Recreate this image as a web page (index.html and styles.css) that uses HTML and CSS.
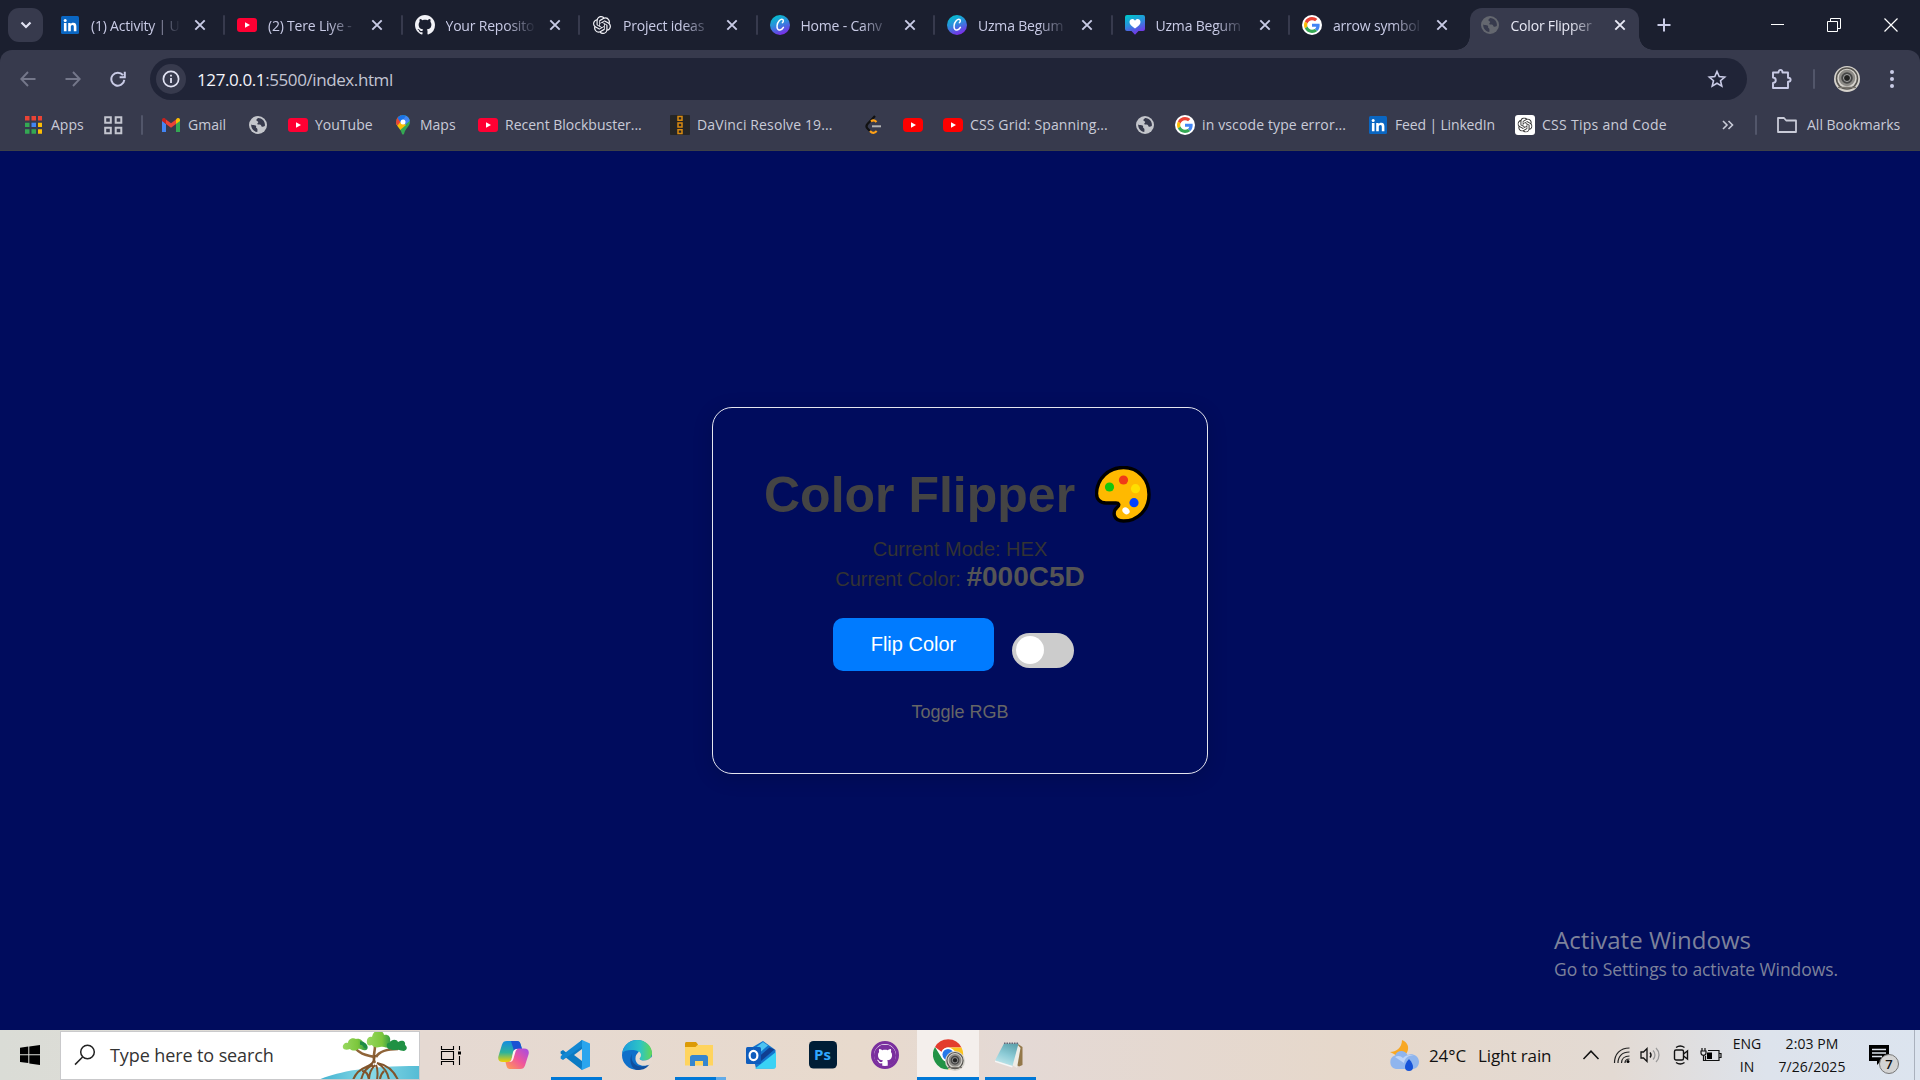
FILE: index.html
```html
<!DOCTYPE html>
<html lang="en">
<head>
<meta charset="utf-8">
<title>Color Flipper</title>
<link rel="stylesheet" href="styles.css">
</head>
<body>
<svg class="defs" aria-hidden="true">
  <defs>
    <linearGradient id="canvaG" x1="0.2" y1="0" x2="0.6" y2="1"><stop offset="0" stop-color="#00c4cc"/><stop offset=".45" stop-color="#2a8fdc"/><stop offset="1" stop-color="#7d2ae8"/></linearGradient>
    <symbol id="linkedin" viewBox="0 0 20 20"><rect x="1" y="1" width="18" height="18" rx="1.5" fill="#0a66c2"/><circle cx="5.2" cy="5.4" r="1.5" fill="#fff"/><path d="M3.9 8h2.6v8.2H3.9zM8.2 8h2.5v1.2c.5-.9 1.4-1.4 2.6-1.4 2.4 0 3.1 1.5 3.1 3.8v4.6h-2.6v-4.1c0-1.2-.2-2.1-1.4-2.1-1.3 0-1.6 1-1.6 2.1v4.1H8.200z" fill="#fff"/></symbol>
    <symbol id="yt" viewBox="0 0 20 20"><rect x="0" y="3" width="20" height="14" rx="3" fill="#ff0033"/><path d="M8 7.200v5.600l5-2.800z" fill="#fff"/></symbol>
    <symbol id="yt2" viewBox="0 0 20 20"><rect x="0" y="3" width="20" height="14" rx="4" fill="#ff0000"/><path d="M8 7.200v5.600l5-2.800z" fill="#fff"/></symbol>
    <symbol id="github" viewBox="0 0 16 16"><path fill="currentColor" d="M8 0C3.58 0 0 3.58 0 8c0 3.54 2.29 6.53 5.47 7.59.4.07.55-.17.55-.38 0-.19-.01-.82-.01-1.49-2.01.37-2.53-.49-2.69-.94-.09-.23-.48-.94-.82-1.13-.28-.15-.68-.52-.01-.53.63-.01 1.08.58 1.23.82.72 1.21 1.87.87 2.33.66.07-.52.28-.87.51-1.07-1.78-.2-3.64-.89-3.64-3.95 0-.87.31-1.59.82-2.15-.08-.2-.36-1.02.08-2.12 0 0 .67-.21 2.2.82.64-.18 1.32-.27 2-.27s1.36.09 2 .27c1.53-1.04 2.2-.82 2.2-.82.44 1.1.16 1.92.08 2.12.51.56.82 1.27.82 2.15 0 3.07-1.87 3.75-3.65 3.95.29.25.54.73.54 1.48 0 1.07-.01 1.93-.01 2.2 0 .21.15.46.55.38A8.01 8.01 0 0 0 16 8c0-4.42-3.58-8-8-8z"/></symbol>
    <symbol id="openai" viewBox="0 0 24 24"><path fill="currentColor" d="M22.2819 9.8211a5.9847 5.9847 0 0 0-.5157-4.9108 6.0462 6.0462 0 0 0-6.5098-2.9A6.0651 6.0651 0 0 0 4.9807 4.1818a5.9847 5.9847 0 0 0-3.9977 2.9 6.0462 6.0462 0 0 0 .7427 7.0966 5.98 5.98 0 0 0 .511 4.9107 6.051 6.051 0 0 0 6.5146 2.9001A5.9847 5.9847 0 0 0 13.2599 24a6.0557 6.0557 0 0 0 5.7718-4.2058 5.9894 5.9894 0 0 0 3.9977-2.9001 6.0557 6.0557 0 0 0-.7475-7.0729zm-9.022 12.6081a4.4755 4.4755 0 0 1-2.8764-1.0408l.1419-.0804 4.7783-2.7582a.7948.7948 0 0 0 .3927-.6813v-6.7369l2.02 1.1686a.071.071 0 0 1 .038.052v5.5826a4.504 4.504 0 0 1-4.4945 4.4944zm-9.6607-4.1254a4.4708 4.4708 0 0 1-.5346-3.0137l.142.0852 4.783 2.7582a.7712.7712 0 0 0 .7806 0l5.8428-3.3685v2.3324a.0804.0804 0 0 1-.0332.0615L9.74 19.9502a4.4992 4.4992 0 0 1-6.1408-1.6464zM2.3408 7.8956a4.485 4.485 0 0 1 2.3655-1.9728V11.6a.7664.7664 0 0 0 .3879.6765l5.8144 3.3543-2.0201 1.1685a.0757.0757 0 0 1-.071 0l-4.8303-2.7865A4.504 4.504 0 0 1 2.3408 7.872zm16.5963 3.8558L13.1038 8.364 15.1192 7.2a.0757.0757 0 0 1 .071 0l4.8303 2.7913a4.4944 4.4944 0 0 1-.6765 8.1042v-5.6772a.79.79 0 0 0-.407-.667zm2.0107-3.0231l-.142-.0852-4.7735-2.7818a.7759.7759 0 0 0-.7854 0L9.409 9.2297V6.8974a.0662.0662 0 0 1 .0284-.0615l4.8303-2.7866a4.4992 4.4992 0 0 1 6.6802 4.66zM8.3065 12.863l-2.02-1.1638a.0804.0804 0 0 1-.038-.0567V6.0742a4.4992 4.4992 0 0 1 7.3757-3.4537l-.142.0805L8.704 5.459a.7948.7948 0 0 0-.3927.6813zm1.0976-2.3654l2.602-1.4998 2.6069 1.4998v2.9994l-2.5974 1.4997-2.6067-1.4997Z"/></symbol>
    <symbol id="canva" viewBox="0 0 20 20"><circle cx="10" cy="10" r="10" fill="url(#canvaG)"/><path d="M12.400 7.600c1-.4 1.500-2.700 0-3.200-2-.5-4.800 2.300-5.300 6.100-.4 3.300 1.100 4.800 2.900 4.500 1.500-.2 2.700-1.300 3.400-2.600" fill="none" stroke="#fff" stroke-width="1.500" stroke-linecap="round"/></symbol>
    <symbol id="canvaHeart" viewBox="0 0 20 20"><path d="M2 0h16a2 2 0 0 1 2 2v12a2 2 0 0 1-2 2h-4.500L10 19.800 6.500 16H2a2 2 0 0 1-2-2V2a2 2 0 0 1 2-2z" fill="url(#canvaG)"/><path d="M10 13.500C6.500 11 4.500 9.300 4.500 7c0-3 3.900-4.100 5.500-1.300C11.600 2.900 15.500 4 15.500 7c0 2.300-2 4-5.500 6.500z" fill="#fff"/></symbol>
    <symbol id="google" viewBox="0 0 60 60"><circle cx="30" cy="30" r="30" fill="#fff"/><g transform="translate(6 6)"><path fill="#EA4335" d="M24 9.500c3.540 0 6.710 1.220 9.210 3.600l6.850-6.850C35.900 2.380 30.470 0 24 0 14.620 0 6.510 5.380 2.560 13.220l7.980 6.190C12.430 13.720 17.740 9.500 24 9.500z"/><path fill="#4285F4" d="M46.980 24.550c0-1.570-.15-3.090-.38-4.550H24v9.020h12.940c-.58 2.960-2.260 5.480-4.780 7.180l7.730 6c4.510-4.180 7.090-10.360 7.090-17.650z"/><path fill="#FBBC05" d="M10.530 28.590c-.48-1.450-.76-2.990-.76-4.590s.27-3.140.76-4.590l-7.980-6.190C.92 16.460 0 20.120 0 24c0 3.880.92 7.540 2.560 10.780l7.970-6.190z"/><path fill="#34A853" d="M24 48c6.480 0 11.930-2.130 15.890-5.810l-7.730-6c-2.150 1.450-4.920 2.300-8.160 2.300-6.260 0-11.570-4.220-13.470-9.910l-7.980 6.190C6.510 42.620 14.620 48 24 48z"/></g></symbol>
    <symbol id="globe" viewBox="0 0 20 20"><circle cx="10" cy="10" r="9" fill="currentColor"/><path d="M3.200 9.500c1.500.8 3.200.3 4.400 1 1.300.8-.2 1.900.9 2.600 1 .6 1.200 1.300.8 3.900-3.400-.3-6.400-3.600-6.100-7.500zM10.200 3c-1.400 1-2 1.600-1.700 2.600.3.800 1.600.5 1.700 1.500.1.900-1.100 1-.9 1.900.3.900 2.100.1 3.200.8.900.6.6 1.700 1.600 2 .8.200 1.800-.2 2.700-.7.900-4-2.300-8.100-6.600-8.100z" fill="var(--bg)"/></symbol>
    <symbol id="x" viewBox="0 0 12 12"><path d="M1.300 1.300l9.400 9.400M10.700 1.300L1.300 10.700" stroke="currentColor" stroke-width="1.900" fill="none"/></symbol>
    <symbol id="lens" viewBox="0 0 26 26"><circle cx="13" cy="13" r="13" fill="#d5d2cc"/><circle cx="13" cy="12.500" r="10.500" fill="none" stroke="#55534f" stroke-width="1.500"/><circle cx="13" cy="12" r="7" fill="#464646" stroke="#8c8a86" stroke-width="2.500"/><circle cx="13" cy="12" r="3.500" fill="#222" stroke="#aaa"/><path d="M4 21.500h18" stroke="#77736c" stroke-width="1.500"/></symbol>
  </defs>
</svg>

<header class="tabstrip">
  <button class="tabsearch"><svg width="12" height="8" viewBox="0 0 12 8"><path d="M1.500 1.500L6 6l4.500-4.500" fill="none" stroke="#e1e2f2" stroke-width="2.200"/></svg></button>
  <div class="tabs">
    <div class="tab"><svg class="fav"><use href="#linkedin"/></svg><span class="title">(1) Activity | U</span><svg class="close"><use href="#x"/></svg></div>
    <div class="tab"><svg class="fav"><use href="#yt"/></svg><span class="title">(2) Tere Liye -</span><svg class="close"><use href="#x"/></svg></div>
    <div class="tab"><svg class="fav white"><use href="#github"/></svg><span class="title">Your Reposito</span><svg class="close"><use href="#x"/></svg></div>
    <div class="tab"><svg class="fav white ai"><use href="#openai"/></svg><span class="title">Project ideas</span><svg class="close"><use href="#x"/></svg></div>
    <div class="tab"><svg class="fav"><use href="#canva"/></svg><span class="title">Home - Canv</span><svg class="close"><use href="#x"/></svg></div>
    <div class="tab"><svg class="fav"><use href="#canva"/></svg><span class="title">Uzma Begum</span><svg class="close"><use href="#x"/></svg></div>
    <div class="tab"><svg class="fav"><use href="#canvaHeart"/></svg><span class="title">Uzma Begum</span><svg class="close"><use href="#x"/></svg></div>
    <div class="tab last"><svg class="fav"><use href="#google"/></svg><span class="title">arrow symbol</span><svg class="close"><use href="#x"/></svg></div>
    <div class="tab active"><svg class="fav dim"><use href="#globe"/></svg><span class="title">Color Flipper</span><svg class="close"><use href="#x"/></svg></div>
  </div>
  <svg class="newtab" width="14" height="14" viewBox="0 0 14 14"><path d="M7 .5v13M.5 7h13" stroke="#c9cbe6" stroke-width="2"/></svg>
  <div class="winbtns">
    <svg width="14" height="14" viewBox="0 0 14 14"><path d="M1 6.500h13" stroke="#fff"/></svg>
    <svg width="14" height="14" viewBox="0 0 14 14"><path d="M.5 3.500h10v10H.5zM3.500 3V.5h10v10H11" fill="none" stroke="#fff"/></svg>
    <svg width="14" height="14" viewBox="0 0 14 14"><path d="M.5.5l13 13M13.500.5l-13 13" stroke="#fff" stroke-width="1.200"/></svg>
  </div>
</header>

<nav class="toolbar">
  <div class="nav">
    <svg width="16" height="16" viewBox="0 0 16 16"><path d="M8 1L1.300 8 8 15M1.500 8H15.500" fill="none" stroke="#74778a" stroke-width="1.900"/></svg>
    <svg width="16" height="16" viewBox="0 0 16 16"><path d="M8 1l6.700 7L8 15M14.500 8H.5" fill="none" stroke="#74778a" stroke-width="1.900"/></svg>
    <svg width="16" height="16" viewBox="0 0 16 16"><path d="M14.300 8.800A6.500 6.500 0 1 1 13 4.200M14.800.8v5.400H9.600" fill="none" stroke="#c9cbe6" stroke-width="2"/></svg>
  </div>
  <div class="omnibox">
    <span class="info"><svg width="18" height="18" viewBox="0 0 18 18"><circle cx="9" cy="9" r="7.600" fill="none" stroke="#e1e2f2" stroke-width="1.700"/><path d="M9 8v5M9 4.800v1.800" stroke="#e1e2f2" stroke-width="1.800"/></svg></span>
    <span class="url"><b>127.0.0.1</b>:5500/index.html</span>
    <svg class="star" width="20" height="20" viewBox="0 0 20 20"><path d="M10 2.500l2.200 5.100 5.500.5-4.200 3.600 1.300 5.400-4.800-2.900-4.800 2.900 1.300-5.400L2.300 8.100l5.500-.5z" fill="none" stroke="#c9cbe6" stroke-width="1.600"/></svg>
  </div>
  <div class="tools">
    <svg width="22" height="22" viewBox="0 0 22 22"><path d="M2 4.500h5.500c0-3.500 4-3.500 4 0H17v5.300c3.500 0 3.500 4 0 4V20H2v-5c3.700-.4 3.700-5.100 0-5.500z" fill="none" stroke="#c9cbe6" stroke-width="1.900" stroke-linejoin="round"/></svg>
    <i class="bar"></i>
    <svg width="26" height="26"><use href="#lens"/></svg>
    <svg width="6" height="20" viewBox="0 0 6 20"><circle cx="3" cy="3" r="2" fill="#c9cbe6"/><circle cx="3" cy="10" r="2" fill="#c9cbe6"/><circle cx="3" cy="17" r="2" fill="#c9cbe6"/></svg>
  </div>
</nav>

<nav class="bookmarks">
  <a><svg viewBox="0 0 20 20"><g><path fill="#ea4335" d="M1 1h4.500v4.500H1zM7.500 1H12v4.500H7.500zM14 1h4v4.500h-4z"/><path fill="#34a853" d="M1 7.700h4.500V12H1zM1 14.200h4.500v4.500H1zM7.500 14.200H12v4.500H7.500z"/><path fill="#4285f4" d="M7.500 7.700H12V12H7.500z"/><path fill="#fbbc05" d="M14 7.700h4V12h-4zM14 14.200h4v4.500h-4z"/></g></svg>Apps</a>
  <a><svg viewBox="0 0 20 20"><path d="M2.200 2.200h5.600v5.600H2.200zM12.700 2.200h5.600v5.600h-5.600zM2.200 12.700h5.600v5.600H2.200zM12.700 12.700h5.600v5.600h-5.600z" fill="none" stroke="#c3c5cf" stroke-width="2"/></svg></a>
  <i class="bar"></i>
  <a><svg viewBox="0 0 20 20"><path d="M1 5v12h4V9z" fill="#4285f4"/><path d="M19 5v12h-4V9z" fill="#34a853"/><path d="M15 4.500V9l4-3V5c0-2-2.200-3-4-.5z" fill="#fbbc04"/><path d="M1 5v1l4 3V4.500C3.200 2 1 3 1 5z" fill="#c5221f"/><path d="M5 4.500V9l5 3.800L15 9V4.500L10 8.300z" fill="#ea4335"/></svg>Gmail</a>
  <a><svg class="soft"><use href="#globe"/></svg></a>
  <a><svg><use href="#yt"/></svg>YouTube</a>
  <a><svg viewBox="0 0 20 20"><clipPath id="pin"><path d="M10 0a7 7 0 0 1 7 7c0 4-4.500 6-5.800 11.500-.4 1.500-2 1.500-2.400 0C7.500 13 3 11 3 7a7 7 0 0 1 7-7z"/></clipPath><g clip-path="url(#pin)"><path fill="#34a853" d="M0 0h20v20H0z"/><path fill="#fbbc04" d="M0 12L10 2l3 8-7 6z"/><path fill="#ea4335" d="M0 0h8l1 5-5 6-4-1z"/><path fill="#1a73e8" d="M5 0h9L8 8 4.500 3z"/><path fill="#4285f4" d="M10 5l4-6 4 6-6 5z"/></g><circle cx="10" cy="7" r="2.500" fill="#fff"/></svg>Maps</a>
  <a><svg><use href="#yt"/></svg>Recent Blockbuster...</a>
  <a class="loose"><svg viewBox="0 0 20 20"><rect width="20" height="20" rx="1" fill="#252525"/><path d="M8 1.500h4v3.700H8zM8 8h4v4H8zM8 14.800h4v3.700H8z" fill="none" stroke="#d98a10" stroke-width="1.500"/></svg>DaVinci Resolve 19...</a>
  <a><svg viewBox="0 0 20 20"><path d="M12 1L4.500 9c-1.400 1.500-1.400 3 0 4.500L7 16" fill="none" stroke="#111" stroke-width="2.200"/><path d="M8 6.500c2-1.700 3.500-1.500 5.500.5M7 16c2.500 2.700 4.500 2.300 6.700 0" fill="none" stroke="#ffa116" stroke-width="2.200"/><path d="M9 11.300h9" stroke="#b3b3b3" stroke-width="2"/></svg></a>
  <a><svg><use href="#yt2"/></svg></a>
  <a class="loose"><svg><use href="#yt2"/></svg>CSS Grid: Spanning...</a>
  <a><svg class="soft"><use href="#globe"/></svg></a>
  <a class="loose"><svg><use href="#google"/></svg>in vscode type error...</a>
  <a class="tight"><svg><use href="#linkedin"/></svg>Feed | LinkedIn</a>
  <a class="looser"><svg viewBox="0 0 20 20"><rect width="20" height="20" rx="3" fill="#fff"/><g color="#333"><use href="#openai" x="2.500" y="2.500" width="15" height="15"/></g></svg>CSS Tips and Code</a>
  <a><svg viewBox="0 0 20 20"><path d="M5 6l4 4-4 4M10.500 6l4 4-4 4" fill="none" stroke="#c9cbd8" stroke-width="1.600"/></svg></a>
  <i class="bar"></i>
  <a><svg class="folder" viewBox="0 0 22 20"><path d="M2 3h6l2.200 2.500H20V17H2z" fill="none" stroke="#c9cbd8" stroke-width="1.800" stroke-linejoin="round"/></svg>All Bookmarks</a>
</nav>

<main class="page">
  <section class="card">
    <h1>Color Flipper
      <svg width="56" height="58" viewBox="0 0 56 58"><path d="M28.500 1.500C44 1.500 54 14 54 28.500 54 43.500 43 55 28.500 55c-10.500 0-11.500-9.500-6-14 2.200-2 1.500-4-1.500-4H11C4.500 37 1.500 32.500 1.500 27.500 2 12 14 1.500 28.500 1.500z" fill="#ffb900" stroke="#000" stroke-width="3.400"/><circle cx="28.500" cy="14" r="4.600" fill="#f03a17"/><circle cx="14.500" cy="21" r="4.600" fill="#16c60c"/><circle cx="40.500" cy="22.700" r="4.600" fill="#ffde00"/><circle cx="39" cy="36.700" r="4.600" fill="#0040ff"/><ellipse cx="31" cy="44.800" rx="3.900" ry="3.100" transform="rotate(40 31 44.800)" fill="#fff"/></svg></h1>
    <p class="mode">Current Mode: HEX</p>
    <p class="color">Current Color: <strong>#000C5D</strong></p>
    <div class="controls">
      <button class="flip">Flip Color</button>
      <span class="switch"><i></i></span>
    </div>
    <p class="label">Toggle RGB</p>
  </section>
  <aside class="watermark"><p>Activate Windows</p><p>Go to Settings to activate Windows.</p></aside>
</main>

<footer class="taskbar">
  <div class="start"><svg width="20" height="20" viewBox="0 0 20 20"><path d="M0 2.800L8.300 1.600v7.700H0zM9.300 1.500L20 0v9.300H9.300zM0 10.300h8.300v7.800L0 17zM9.300 10.300H20V20L9.300 18.400z"/></svg></div>
  <div class="search">
    <svg width="22" height="22" viewBox="0 0 22 22"><circle cx="13.500" cy="8" r="6.800" fill="none" stroke="#222" stroke-width="1.500"/><path d="M8.600 13L1 20.600" stroke="#222" stroke-width="1.500"/></svg>
    <span>Type here to search</span>
    <svg class="tree" width="101" height="49" viewBox="0 0 101 49">
      <defs><linearGradient id="sea" x1="0" x2="1"><stop offset="0" stop-color="#3fb0cf"/><stop offset=".5" stop-color="#8adbe8"/><stop offset="1" stop-color="#55bcd5"/></linearGradient><linearGradient id="leaf" x1="0" x2="1"><stop offset="0" stop-color="#98d860"/><stop offset=".6" stop-color="#7cc63c"/><stop offset="1" stop-color="#239347"/></linearGradient></defs>
      <path d="M0 49C20 41 45 35 101 35v14z" fill="url(#sea)"/>
      <path d="M57 15c0 7-3 12 0 17M37 17c6 7 12 7 19 9M80 18c-8 0-18 1-22 8" fill="none" stroke="#8f6439" stroke-width="2.600"/>
      <path d="M57 24c-1 8-3 9-9 12-7 3-10 6-13 13M55 34c-8 3-10 8-12 15M57 34c-4 4-6 8-6 15M58 34c2 4 2 8 1 15M59 32c7 4 11 9 12 17M59 32c11 2 17 8 21 17M44 40c5 0 6 4 7 9M66 40c-3 3-4 5-4 9" fill="none" stroke="#80542b" stroke-width="2"/>
      <g fill="url(#leaf)"><path d="M25 17c-1-4 3-6 5-5 0-4 5-6 8-4 4-1 7 2 7 4 5 0 6 6 3 7-4 1-5-2-8-1-2 2-6 2-8 0-3 1-6 1-7-1z"/><path d="M49 12c-1-4 2-7 5-6 1-5 4-7 7-6 4 0 5 3 5 4 5-1 7 3 6 6 3 2 3 6 0 7-4 0-6-2-10-1-4 1-7 0-8-2-3 1-5 0-5-2z"/><path d="M69 16c-1-3 1-5 3-4 1-4 7-4 8-1 5-3 8 0 7 3 3 2 2 5-1 6-3 0-5-2-8-1-4 0-8 0-9-3z" fill="#209144"/></g>
      <path d="M42 12c4 0 6 3 5 5" stroke="#1e8d45" stroke-width="3.500" fill="none"/>
    </svg>
  </div>
  <div class="apps">
    <div class="app"><svg width="22" height="20" viewBox="0 0 22 20"><path d="M1.500 1v3.500h12V1M1.500 20v-3.500h12V20M1.500 6.500h12v8h-12zM19.500 1v4M19.500 11v9" fill="none" stroke="#000" stroke-width="1.100"/><path d="M18 6.500h3v3h-3z"/></svg></div>
    <div class="app"><svg width="31" height="30" viewBox="0 0 31 30"><defs><linearGradient id="cpA" x1="0" y1="0" x2="0" y2="1"><stop offset="0" stop-color="#138be0"/><stop offset=".55" stop-color="#2fb39a"/><stop offset="1" stop-color="#f5d000"/></linearGradient><linearGradient id="cpB" x1="1" y1="0" x2="0" y2="1"><stop offset="0" stop-color="#a04be8"/><stop offset=".5" stop-color="#f0569a"/><stop offset="1" stop-color="#ffa04e"/></linearGradient></defs><path d="M9 1h10c2 0 3 1 3.500 3L24 9h-4c-3 0-4 1.500-5 5l-1.500 5c-.7 2-1.500 3-4 3H5c-4 0-5.500-2.500-4.500-6L4 4.500C5 2 6 1 9 1z" fill="url(#cpA)"/><path d="M13 1h6c2 0 3 1 3.500 3L24 9h-4c-2 0-3 .5-4 2z" fill="#1b51d3"/><path d="M22 29H12c-2 0-3-1-3.500-3L7.500 22h2.200c2.500 0 3.500-1.500 4.300-4l1.800-5.500c1-3 2-4 5-4H26c4 0 5.500 2.500 4.500 6L27 25.500c-1 2.500-2 3.500-5 3.500z" fill="url(#cpB)"/><path d="M15 12c1.500-3 2.500-3 4.500-3-2 1-2 3-3 6l-1 3.500c-.7 2-1.500 3.500-4 3.500 2-1 2-3 2.500-4.500z" fill="#fff1ef"/></svg></div>
    <div class="app run"><svg width="30" height="30" viewBox="0 0 30 30"><path d="M22 0L7.500 13.500 3 10 .6 11.500v2L22 30l2-4V4z" fill="#0a7bc4"/><path d="M.6 18.500l2.400 1.500L24 5 22 0 .8 16z" fill="#1287d2"/><path d="M22 0l8 3.500v23L22 30c-1 0 0-3 0-4V4z" fill="#2aa5ee"/><path d="M22 9v12l-8-6z" fill="#e7dbd1"/></svg></div>
    <div class="app"><svg width="30" height="30" viewBox="0 0 30 30"><defs><linearGradient id="edA" x1="0" x2="1"><stop offset="0" stop-color="#1b9bdc"/><stop offset=".6" stop-color="#2dc4c5"/><stop offset="1" stop-color="#62d854"/></linearGradient></defs><circle cx="15" cy="15" r="15" fill="#0e6fca"/><path d="M.3 13C1.500 5 8 0 15 0c9 0 15 6.500 15 13 0 5-4 7.500-8 7.500-3 0-4.800-1-4.300-2.200 1.800-3 .3-6.800-3.700-7.800C8 9.500 2 10.500.3 13z" fill="url(#edA)"/><path d="M10 14c-2 7 3 13 10 12.500 3.500 0 5.500-1.200 7.600-2.500C24.500 29 20 30.200 15 30 9 29 6.500 19 10 14z" fill="#114f9e"/><path d="M17 11.500c2.500 1.800 2.500 4.500.8 6.800-.7 1.400 1.400 2.300 4.200 2.300 3 0 6-1.600 7.500-4l1.500 5-3 2.700c-6 3-14 1.500-14.500-5-.2-4 1-5 3.500-7.800z" fill="#e7dbd1"/></svg></div>
    <div class="app run split"><svg width="28" height="26" viewBox="0 0 28 26"><path d="M0 1.500C0 .6.600 0 1.500 0H11l2 2.500V6H0z" fill="#dc9a05"/><path d="M0 5h10.500l2-2H28v20.500H0z" fill="#ffd45e"/><path d="M5 24v-8.500c0-1.500 1-2.500 2.500-2.500h13c1.500 0 2.500 1 2.500 2.500V24h-5v-5h-8v5z" fill="#3686cf"/></svg></div>
    <div class="app"><svg width="30" height="28" viewBox="0 0 30 28"><path d="M5 7L17 0l12.500 9v15.500c0 2-1 3-3 3H10z" fill="#1374cc"/><path d="M8 8l9-7 5 3.500L12 13z" fill="#4cc3f2"/><path d="M28.500 8.500L15 20l-2-4.500 10.500-9z" fill="#103f91"/><path d="M9 27.500L30 11v14c0 2-1 2.800-3 2.800H12z" fill="#3ad2f5"/><rect y="6" width="15" height="17" rx="1.500" fill="#0f5dbd"/><ellipse cx="7.500" cy="14.500" rx="3.900" ry="4.600" fill="none" stroke="#fff" stroke-width="2.200"/></svg></div>
    <div class="app"><svg width="28" height="28" viewBox="0 0 28 28"><rect width="28" height="27.500" rx="4.500" fill="#001e36"/><text x="5" y="18.500" class="ps">Ps</text></svg></div>
    <div class="app"><svg width="28" height="28" viewBox="0 0 28 28"><circle cx="14" cy="14" r="13" fill="#fff"/><g color="#7a2f9e"><use href="#github" x="3" y="3.500" width="22" height="22"/></g><circle cx="14" cy="14" r="12.500" fill="none" stroke="#7a2f9e" stroke-width="3"/></svg></div>
    <div class="app run current"><svg width="34" height="32" viewBox="0 0 34 32"><circle cx="15" cy="15.500" r="15" fill="#fff"/><path d="M2 8A15 15 0 0 1 28.500 8.500H15.200a7 7 0 0 0-6.500 4.500z" fill="#e33b2e"/><path d="M28.500 8.500A15 15 0 0 1 15 30.500l6.500-11.500a7 7 0 0 0 .3-7L15 8.500z" fill="#fcc31e"/><path d="M2 8A15 15 0 0 0 15 30.500l6-10.500a7 7 0 0 1-12-.5z" fill="#229346"/><circle cx="15" cy="15.500" r="7" fill="#fff"/><circle cx="15" cy="15.500" r="5.500" fill="#2678ea"/><use href="#lens" x="12" y="12" width="20" height="20"/></svg></div>
    <div class="app run note"><svg width="28" height="27" viewBox="0 0 28 27"><defs><linearGradient id="pad" x1=".7" y1="0" x2=".3" y2="1"><stop offset="0" stop-color="#5fa3ae"/><stop offset=".5" stop-color="#8ccbd6"/><stop offset="1" stop-color="#c4e8ec"/></linearGradient></defs><path d="M23 2l4.500 3v18L24 24.500 20 22z" fill="#93784a"/><path d="M22 2l3.500 4-3.500 20-5-3z" fill="#eeece6"/><path d="M9 1.500h14.500L17.500 24 0 18.500z" fill="url(#pad)"/><path d="M0 18.500L17.500 24l-.3 1.500L0 20z" fill="#f4f7f7"/><path d="M9 1.200h15" stroke="#667" stroke-width="1.500" stroke-dasharray="1.500 1"/></svg></div>
  </div>
  <div class="tray">
    <svg class="weather" width="32" height="32" viewBox="0 0 32 32"><path d="M13 1c6 2 7.500 8 5 12.500-3 4.500-9 5-13 1.500l-4-2c6 0 12-4 12-12z" fill="#f8a823"/><path d="M7 30a7 7 0 0 1-1-13.500C7.500 11 16 10 18.500 16c4-2 11 0 11.500 6.500 0 5-3 7.500-7 7.500z" fill="#8fb5ee"/><path d="M6 18c3-2 6-1 8 1 3-3 7-4 11-2-3-1-9 0-10 7" fill="#bed5f8"/><path d="M20 20c3 3 4 6 4 8a4 4 0 0 1-8 0c0-2 1-5 4-8z" fill="#1653d8"/></svg>
    <span class="temp">24°C</span><span class="cond">Light rain</span>
    <svg class="chev" width="18" height="12" viewBox="0 0 18 12"><path d="M1.500 10L9 2.200l7.500 7.800" fill="none" stroke="#111" stroke-width="1.500"/></svg>
    <svg class="wifi" width="18" height="18" viewBox="0 0 18 18"><path d="M1.500 17C1.500 8 7 2 16.500 2M5 17C5 10.500 9 6 16.500 6M8.500 17c0-4 3-7 8-7M12 17c0-2 1.500-4 4.500-4" fill="none" stroke="#222" stroke-width="1.200"/><circle cx="15" cy="15.500" r="1.500"/></svg>
    <svg class="snd" width="22" height="18" viewBox="0 0 22 18"><path d="M1 6h2.500L7 2.500v13L3.500 12H1z" fill="none" stroke="#111" stroke-width="1.300"/><path d="M10 6.500c1.300 1.500 1.300 3.500 0 5" fill="none" stroke="#111" stroke-width="1.300"/><path d="M13 4.500c2.600 2.500 2.600 6.500 0 9M16 2c4 4 4 10 0 14" fill="none" stroke="#999" stroke-width="1.300"/></svg>
    <svg class="cam" width="16" height="20" viewBox="0 0 16 20"><rect x="1.500" y="5" width="9" height="10" rx="1.500" fill="none" stroke="#111" stroke-width="1.400"/><path d="M10.500 9L14.500 6v8l-4-3M3 2.500C5.500.8 9 .8 11.500 2.500M3 17.500c2.500 1.700 6 1.700 8.500 0" fill="none" stroke="#111" stroke-width="1.400"/></svg>
    <svg class="batt" width="22" height="16" viewBox="0 0 22 16"><path d="M8 3.500h11v10H5.500V9M19.500 6.500h1.500v4h-1.500" fill="none" stroke="#111" stroke-width="1.200"/><path d="M7 5.500h5V12H7z"/><path d="M2 1v3M5 1v3M1 4h5v2c0 3-5 3-5 0zM3.500 8v5.500h3" fill="none" stroke="#111" stroke-width="1.200"/></svg>
    <div class="stack lang"><span>ENG</span><span>IN</span></div>
    <div class="stack clock"><span>2:03 PM</span><span>7/26/2025</span></div>
    <div class="notify"><svg width="20" height="20" viewBox="0 0 20 20"><path d="M0 0h20v16H12l-4 4v-4H0z"/><path d="M3 4.500h14M3 8h14M3 11.500h10" stroke="#dde3ec" stroke-width="1.300"/></svg><b>7</b></div>
    <i class="peek"></i>
  </div>
</footer>
</body>
</html>
```
FILE: styles.css
```css
* { box-sizing: border-box; margin: 0; padding: 0; }
body {
  --bg: #373a4d;
  width: 1920px; height: 1080px; overflow: hidden;
  display: grid; grid-template-rows: 50px 58px 43px 879px 50px;
  background: #1b1f2f;
  font-family: "Open Sans", "Noto Sans", sans-serif;
  font-size: 14px; color: #c9cbd8;
}
svg { display: block; flex: none; }
.defs { position: absolute; width: 0; height: 0; }
button { border: 0; font: inherit; }

/* tab strip */
.tabstrip { display: flex; align-items: center; padding-left: 8px; background: #1b1f2f; }
.tabsearch { width: 35px; height: 34px; border-radius: 11px; background: #373a4d; display: grid; place-items: center; }
.tabs { display: flex; align-self: stretch; margin-left: 12px; }
.tab { width: 177.5px; padding-left: 12px; display: flex; align-items: center; position: relative; color: #c9cbe6; }
.tab:first-child { width: 170px; padding-left: 5px; }
.tab:not(.last):not(.active)::after { content: ""; position: absolute; right: 0; top: 15px; width: 2px; height: 20px; background: #373a4d; border-radius: 1px; }
.fav { width: 20px; height: 20px; }
.ai { padding: 1px; }
.white { color: #f2f2f7; }
.dim { color: #64676f; }
.title { width: 92px; margin-left: 11px; white-space: nowrap; letter-spacing: -.2px; mask-image: linear-gradient(90deg, #000 65%, transparent 98%); }
.close { width: 12px; height: 12px; margin-left: 11px; }
.active { margin: 8px 0 0 2px; width: 169px; height: 42px; padding: 0 0 8px 10px; background: var(--bg); border-radius: 12px 12px 0 0; color: #e8e9f5; }
.active::before, .active::after { content: ""; position: absolute; bottom: 0; width: 14px; height: 14px; }
.active::before { left: -14px; background: radial-gradient(circle at 0 0, transparent 13.500px, var(--bg) 14px); }
.active::after { right: -14px; background: radial-gradient(circle at 100% 0, transparent 13.500px, var(--bg) 14px); }
.newtab { margin-left: 18px; }
.winbtns { margin-left: auto; display: flex; gap: 43px; padding-right: 22px; }

/* toolbar */
.toolbar { display: flex; align-items: center; background: var(--bg); border-radius: 12px 12px 0 0; }
.nav { display: flex; gap: 29px; width: 150px; padding-left: 20px; }
.omnibox { width: 1597px; height: 42px; border-radius: 21px; background: #202437; display: flex; align-items: center; padding: 0 20px 0 6px; }
.info { width: 30px; height: 30px; border-radius: 50%; background: #373a4d; display: grid; place-items: center; }
.url { margin-left: 11px; font-size: 17px; letter-spacing: -.4px; color: #c3c5d3; }
.url b { font-weight: 400; color: #f5f5fb; }
.star { margin-left: auto; }
.tools { display: flex; align-items: center; padding-left: 24px; }
.bar { width: 2px; height: 20px; background: #52566a; border-radius: 1px; }
.tools .bar { margin: 0 19px 0 20px; }
.tools svg:last-child { margin-left: 29px; }

/* bookmarks bar */
.bookmarks {
  display: grid; align-items: center; padding: 0 0 9px 24px; background: var(--bg); border-bottom: 1px solid #3e4148;
  grid-template-columns: 79px 38px 20px 87px 40px 105px 85px 192px 193px 40px 40px 192px 40px 193px 147px 203px 37px 21px 1fr;
}
.bookmarks a { display: flex; align-items: center; gap: 7px; white-space: nowrap; }
.bookmarks svg { width: 20px; height: 20px; }
.bookmarks .folder { width: 22px; margin-right: 2px; }
.bookmarks .loose { letter-spacing: .13px; }
.bookmarks .looser { letter-spacing: .28px; }
.bookmarks .tight { letter-spacing: -.15px; }
.soft { color: #c3c5cb; }

/* page */
.page { position: relative; display: grid; place-items: start center; padding-top: 256px; background: #000c5d; font-family: "Liberation Sans", Arial, sans-serif; }
.card { width: 496px; height: 367px; padding-top: 57px; border: 1px solid #e4e5ee; border-radius: 20px; box-shadow: 0 4px 20px rgba(0, 0, 0, .15); font-size: 20px; color: #333; text-align: center; }
.card h1 { height: 60px; padding-left: 51px; display: flex; gap: 20px; font-size: 50px; line-height: 60px; color: #444; }
.card h1 svg { margin-top: 1px; }
.mode { margin-top: 12px; line-height: 24px; }
.color { height: 32px; margin-top: 1px; line-height: 30px; }
.color strong { font-size: 28px; color: #555; }
.controls { display: flex; justify-content: center; gap: 18px; margin-top: 24px; padding-right: 13px; }
.flip { width: 161px; height: 53px; border-radius: 10px; background: #007bff; color: #fff; font-size: 20px; }
.switch { width: 62px; height: 35px; margin-top: 15px; padding: 3px 4px; border-radius: 18px; background: #ccc; }
.switch i { display: block; width: 28px; height: 28px; border-radius: 50%; background: #fff; }
.label { margin-top: 31px; font-size: 18px; line-height: 20px; color: #666; }
.watermark { position: absolute; left: 1554px; top: 772px; color: #7d829b; font-family: "Open Sans", sans-serif; font-size: 17.5px; line-height: 24px; letter-spacing: -.08px; white-space: nowrap; }
.watermark p:first-child { font-size: 24px; line-height: 34px; letter-spacing: 0; }

/* taskbar */
.taskbar { display: flex; background: linear-gradient(90deg, #dadcd6 0, #dfddd7 10%, #e5d9d2 22%, #e8dacd 45%, #e4d9d5 53%, #e6d8cb 70%, #e3dad3 84%, #dde3ec 92%, #dce4ef 100%); color: #111; }
.start { width: 60px; display: grid; place-items: center; }
.search { width: 360px; height: 49px; margin-top: 1px; padding-left: 13px; border: 1px solid #c9c9cb; background: #fff; display: flex; align-items: center; overflow: hidden; font-size: 18px; letter-spacing: -.1px; color: #333; }
.search > svg:first-child, .search span { margin-bottom: 2px; }
.search span { margin-left: 14px; white-space: nowrap; }
.tree { margin-left: auto; }
.apps { display: flex; }
.app { width: 62px; display: grid; place-items: center; position: relative; }
.app:first-child { width: 62px; }
.run::after { content: ""; position: absolute; left: 7px; bottom: 0; width: 51px; height: 3px; background: #0078d7; }
.split::after { background: linear-gradient(90deg, #0078d7 41px, #62abe8 41px); }
.current { background: #f4efec; margin-left: 1px; padding-left: 3px; }
.current::after { left: 0; width: 62px; }
.note { margin-left: -1px; }
.ps { font: 700 15px "Open Sans", sans-serif; fill: #31a8ff; }
.tray { margin-left: auto; display: flex; align-items: center; }
.weather { margin-right: 8px; }
.chev { margin-right: 13px; }
.wifi { margin-right: 9px; }
.snd { margin-right: 11px; }
.cam { margin-right: 11px; }
.batt { margin-right: 8px; }
.temp, .cond { font-size: 17px; letter-spacing: -.1px; white-space: nowrap; }
.temp { width: 49px; }
.cond { width: 104px; }
.stack { display: grid; text-align: center; font-size: 14px; line-height: 22px; }
.stack span:last-child { padding-top: 1px; }
.lang { width: 34px; margin-right: 12px; }
.clock { width: 72px; margin-right: 21px; letter-spacing: .08px; }
.notify { position: relative; width: 45px; }
.notify b { position: absolute; left: 10px; top: 9px; width: 20px; height: 20px; border: 1px solid #777; border-radius: 50%; background: #d3d3d3; font-size: 13px; font-weight: 600; line-height: 18px; text-align: center; }
.peek { width: 6px; align-self: stretch; border-left: 1px solid #aab1bd; }
```
